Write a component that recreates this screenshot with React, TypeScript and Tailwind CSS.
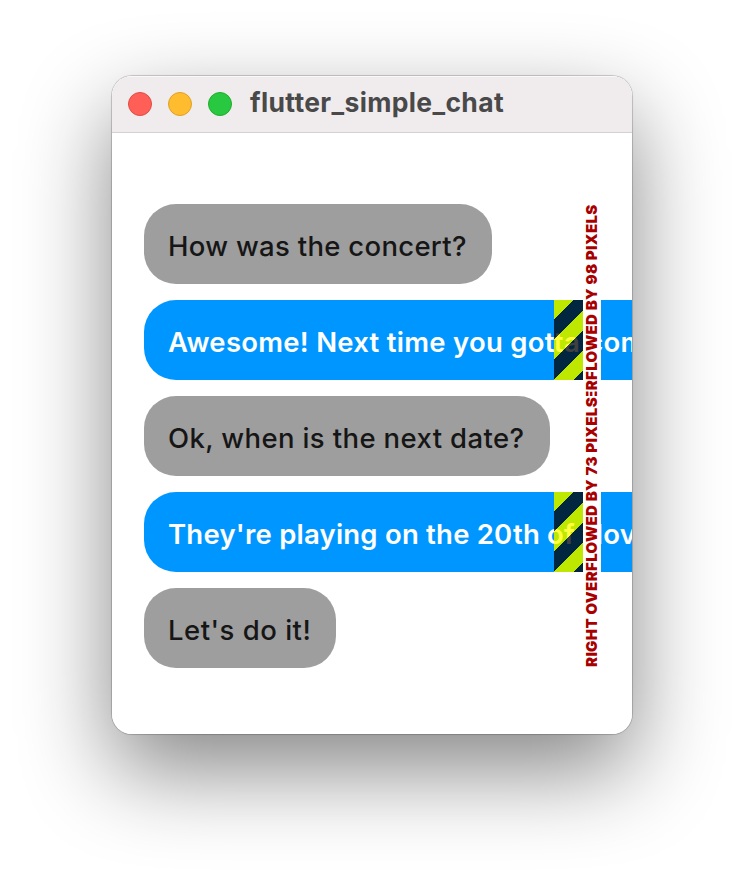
import React from "react";

type Message = {
  text: string;
  mine: boolean;
  box: string;
  spacing: string;
  overflow?: number;
};

const messages: Message[] = [
  { text: "How was the concert?", mine: false, box: "w-[348px]", spacing: "tracking-[0.3px]" },
  { text: "Awesome! Next time you gotta come too", mine: true, box: "w-[586px]", spacing: "tracking-[0.27px]", overflow: 98 },
  { text: "Ok, when is the next date?", mine: false, box: "w-[406px]", spacing: "tracking-[0.37px]" },
  { text: "They're playing on the 20th of November", mine: true, box: "w-[561px]", spacing: "tracking-[0.22px]", overflow: 73 },
  { text: "Let's do it!", mine: false, box: "w-[192px]", spacing: "tracking-[0.5px]" },
];

function Bubble({ message }: { message: Message }) {
  const { text, mine, box, spacing, overflow } = message;
  const tone = mine ? "bg-[#0096ff] text-white font-[600]" : "bg-[#9e9e9e] text-[#161616] font-[550]";
  return (
    <div className="relative h-20 shrink-0">
      <div className={`relative flex h-20 items-center rounded-[32px] px-6 pt-[3px] ${box} ${tone}`}>
        {overflow !== undefined && (
          <div className="absolute inset-y-0 left-[410.4px] w-[29px] bg-[repeating-linear-gradient(135deg,#00a300_0px,#00a300_13.5px,transparent_13.5px,transparent_27.64px,#00a300_27.64px,#00a300_28.28px)]" />
        )}
        <span className={`relative whitespace-nowrap text-[27.5px] leading-8 ${spacing}`}>{text}</span>
      </div>
      {overflow !== undefined && (
        <>
          <div className="absolute inset-y-0 left-[410.4px] w-[29px] bg-[repeating-linear-gradient(135deg,#ffff00bf_0px,#ffff00bf_13.5px,#000000bf_13.5px,#000000bf_27.64px,#ffff00bf_27.64px,#ffff00bf_28.28px)]" />
          <div className="absolute -top-24 left-[439px] flex h-[272px] w-[18px] rotate-180 items-center justify-center bg-white text-[15px] leading-[18px] font-black whitespace-nowrap text-[#a80000] [writing-mode:vertical-rl]">
            <span className="tracking-[0.37px]">RIGHT OVERFLOWED BY {overflow} PIXELS</span>
          </div>
        </>
      )}
    </div>
  );
}

export default function App() {
  return (
    <div className="h-[882px] w-[744px] overflow-hidden bg-white px-28 pt-[76px] font-['Inter','Liberation_Sans',sans-serif]">
      <div className="h-[658px] w-[520px] rounded-[20px] shadow-[0_0_0_1px_rgba(0,0,0,0.14),0_0_2px_rgba(0,0,0,0.15),0_36px_90px_rgba(0,0,0,0.48)]">
        <div className="flex h-full flex-col overflow-hidden rounded-[20px] bg-white">
          <header className="flex h-[57px] shrink-0 items-center gap-4 border-b border-[#d5d2d3] bg-[#f0ecee] pl-4 shadow-[inset_0_1px_0_#faf8f9]">
            <i className="size-6 rounded-full border border-[#e14a43] bg-[#ff5f57]" />
            <i className="size-6 rounded-full border border-[#dfa023] bg-[#febc2e]" />
            <i className="size-6 rounded-full border border-[#1dad2b] bg-[#28c840]" />
            <h1 className="-mt-1 ml-[2px] text-[26.5px] leading-8 font-bold tracking-[0.35px] whitespace-nowrap text-[#494949]">flutter_simple_chat</h1>
          </header>
          <main className="flex flex-col gap-4 pt-[71px] pl-8">
            {messages.map((message) => (
              <Bubble key={message.text} message={message} />
            ))}
          </main>
        </div>
      </div>
    </div>
  );
}
